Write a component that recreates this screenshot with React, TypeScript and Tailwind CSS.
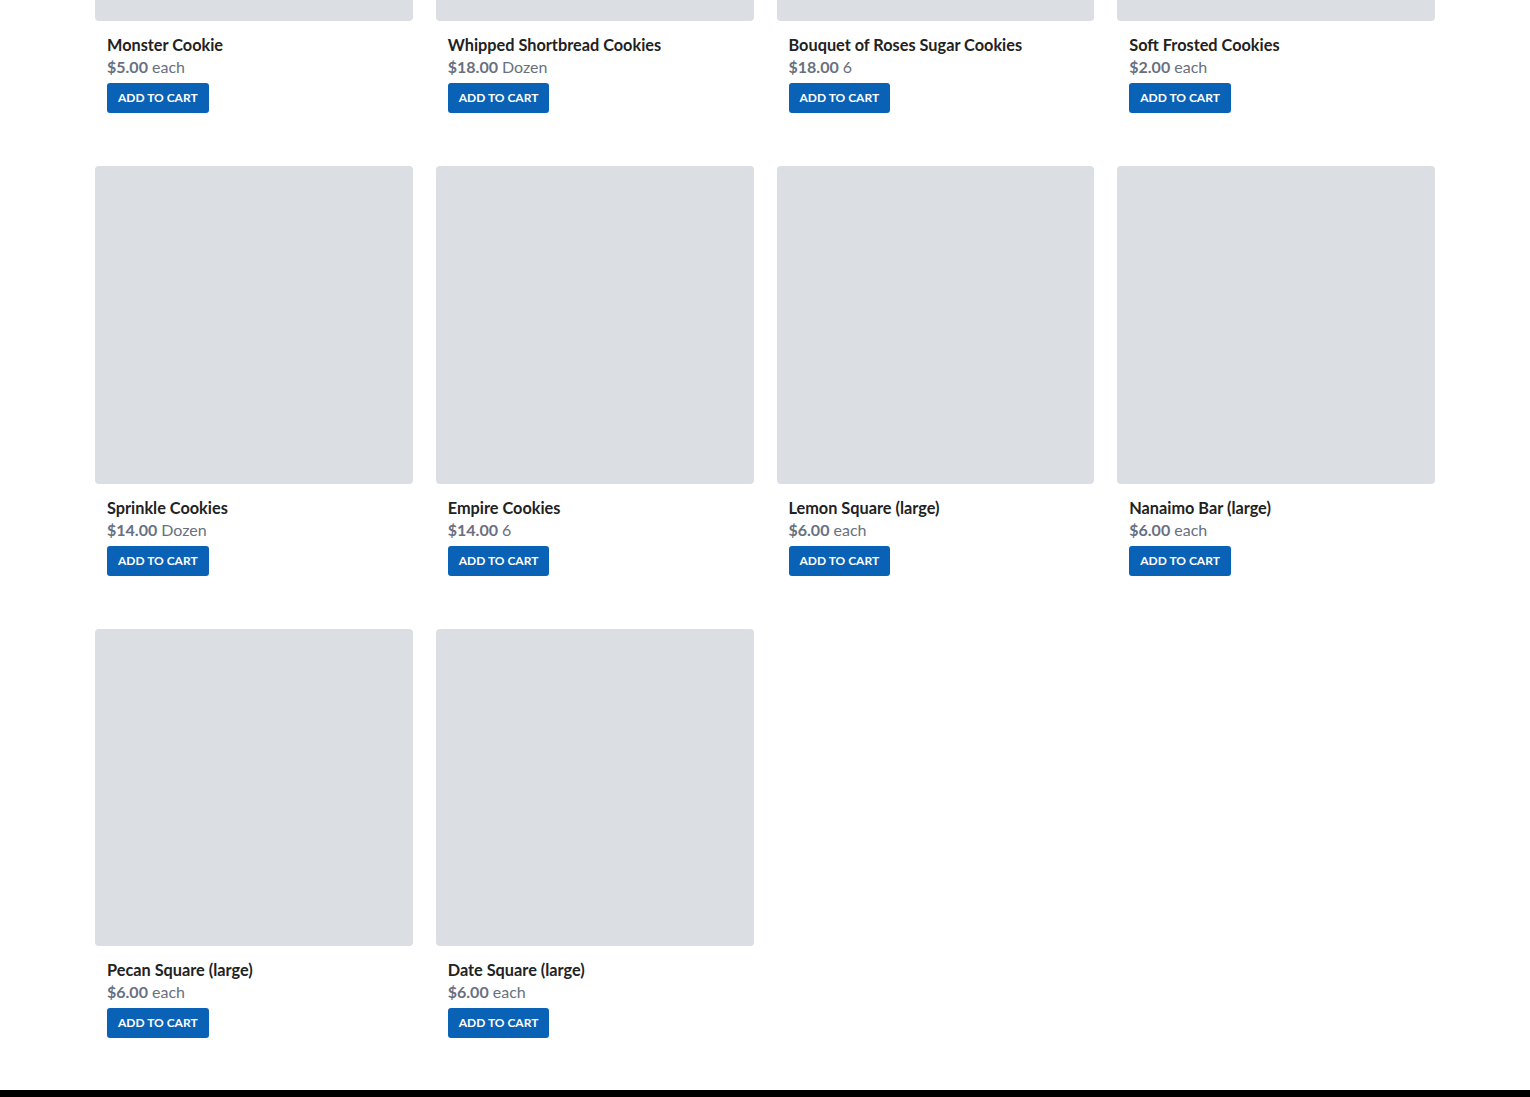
import React from "react";

type Product = {
  name: string;
  price: string;
  unit: string;
};

const PRODUCTS: Product[] = [
  { name: "Monster Cookie", price: "$5.00", unit: "each" },
  { name: "Whipped Shortbread Cookies", price: "$18.00", unit: "Dozen" },
  { name: "Bouquet of Roses Sugar Cookies", price: "$18.00", unit: "6" },
  { name: "Soft Frosted Cookies", price: "$2.00", unit: "each" },
  { name: "Sprinkle Cookies", price: "$14.00", unit: "Dozen" },
  { name: "Empire Cookies", price: "$14.00", unit: "6" },
  { name: "Lemon Square (large)", price: "$6.00", unit: "each" },
  { name: "Nanaimo Bar (large)", price: "$6.00", unit: "each" },
  { name: "Pecan Square (large)", price: "$6.00", unit: "each" },
  { name: "Date Square (large)", price: "$6.00", unit: "each" },
];

function ProductCard({ product }: { product: Product }) {
  return (
    <div className="flex flex-col">
      {/* Image placeholder */}
      <div className="aspect-square w-full rounded-[4px] bg-[#dbdee2]" />
      <div className="px-3 pt-[13px]">
        <h3 className="text-[16.3px] leading-[22px] font-bold text-[#222]">{product.name}</h3>
        <div className="text-[16px] leading-[21px] text-[#687080]">
          <span className="font-bold">{product.price}</span>{" "}
          <span>{product.unit}</span>
        </div>
        <button className="mt-[6px] h-[30px] rounded-[3px] bg-[#0a62b6] px-[11px] text-[12px] font-bold uppercase text-white">
          Add to cart
        </button>
      </div>
    </div>
  );
}

export default function App() {
  return (
    <div className="min-h-screen overflow-hidden bg-white font-['Lato','Liberation_Sans',sans-serif]">
      <div className="mx-auto -mt-[297px] grid w-[1340px] grid-cols-4 gap-x-[23px] gap-y-[53px] pb-[52px]">
        {PRODUCTS.map((p) => (
          <ProductCard key={p.name} product={p} />
        ))}
      </div>
      <footer className="h-40 bg-black" />
    </div>
  );
}
